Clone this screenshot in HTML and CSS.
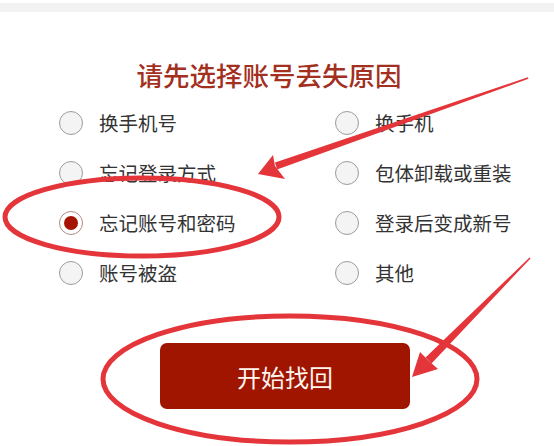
FILE: index.html
```html
<!DOCTYPE html>
<html lang="zh-CN">
<head>
<meta charset="utf-8">
<title>找回账号</title>
<link rel="stylesheet" href="styles.css">
</head>
<body>
<div class="page">
  <div class="topbar"></div>
  <h1 class="title">请先选择账号丢失原因</h1>
  <div class="options">
    <label class="opt"><span class="radio"></span><span class="label">换手机号</span></label>
    <label class="opt"><span class="radio"></span><span class="label">换手机</span></label>
    <label class="opt"><span class="radio"></span><span class="label">忘记登录方式</span></label>
    <label class="opt"><span class="radio"></span><span class="label">包体卸载或重装</span></label>
    <label class="opt"><span class="radio checked"></span><span class="label">忘记账号和密码</span></label>
    <label class="opt"><span class="radio"></span><span class="label">登录后变成新号</span></label>
    <label class="opt"><span class="radio"></span><span class="label">账号被盗</span></label>
    <label class="opt"><span class="radio"></span><span class="label">其他</span></label>
  </div>
  <div class="actions">
    <button class="btn">开始找回</button>
  </div>
  <svg class="marks" width="554" height="446" viewBox="0 0 554 446">
    <ellipse cx="142" cy="217" rx="137" ry="39" fill="none" stroke="#e4353b" stroke-width="5"/>
    <ellipse cx="290" cy="379" rx="187" ry="63" fill="none" stroke="#e4353b" stroke-width="5"/>
    <polygon points="528.5,78.8 527.8,77.2 275,162.5 277,169.5" fill="#e4353b"/>
    <polygon points="258,174 273,155 275,166 285,179" fill="#e4353b"/>
    <polygon points="530.5,258.4 529.5,257.6 425.5,357.5 431.5,363.5" fill="#e4353b"/>
    <polygon points="412,377 420,352 429,361 438,369" fill="#e4353b"/>
  </svg>
</div>
</body>
</html>
```
FILE: styles.css
```css
* { box-sizing: border-box; }
html, body { margin: 0; padding: 0; background: #ffffff; }
body {
  font-family: "Noto Sans CJK SC", "Noto Sans", sans-serif;
  width: 554px;
  height: 446px;
  overflow: hidden;
}
.page { position: relative; width: 554px; height: 446px; padding-top: 3px; }
.topbar { height: 9px; background: #f2f2f2; }
.title {
  margin: 48px 0 0;
  font-size: 26.5px;
  line-height: 30px;
  font-weight: 500;
  color: #a3301f;
  text-align: center;
  padding-right: 16px;
}
.options {
  margin-top: 8px;
  padding-left: 59px;
  display: grid;
  grid-template-columns: 276px 219px;
  grid-auto-rows: 50px;
}
.opt { display: flex; align-items: center; gap: 16px; }
.radio {
  width: 24px;
  height: 24px;
  border-radius: 50%;
  border: 1.5px solid #9c9c9c;
  background: #f4f4f4;
  flex: none;
  display: flex;
  align-items: center;
  justify-content: center;
}
.radio.checked { border-color: #b38a84; background: #ffffff; }
.radio.checked::after {
  content: "";
  width: 14px;
  height: 14px;
  border-radius: 50%;
  background: #a51300;
}
.label { font-size: 19.5px; line-height: 24px; color: #333333; }
.actions { margin-top: 45px; padding-left: 160px; }
.btn {
  width: 250px;
  height: 66px;
  border: none;
  border-radius: 7px;
  background: #9f1500;
  color: #fff6f0;
  font-family: "Noto Sans CJK SC", "Noto Sans", sans-serif;
  font-size: 24px;
}
.marks { position: absolute; left: 0; top: 0; pointer-events: none; }
```
